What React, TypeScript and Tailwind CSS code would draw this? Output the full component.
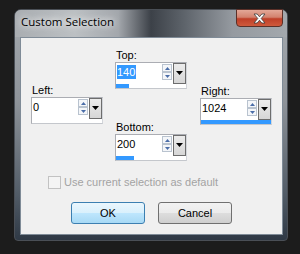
import React from 'react';

interface SpinBoxProps {
  label: string;
  value: number;
  max: number;
  selected?: boolean;
}

const SpinArrow: React.FC<{ up?: boolean }> = ({ up }) => (
  <div className="h-[8px] w-[10px] border border-[#b9c3cf] bg-[#f4f6f9] flex items-center justify-center">
    <svg width="5" height="3" viewBox="0 0 5 3">
      <path d={up ? 'M0 3H5L2.5 0Z' : 'M0 0H5L2.5 3Z'} fill="#4a6da8" />
    </svg>
  </div>
);

const SpinBox: React.FC<SpinBoxProps> = ({ label, value, max, selected }) => {
  // strip under the box shows how far the value is along its range
  const fill = Math.round((value / max) * 70);

  return (
    <div className="flex flex-col w-[72px]">
      <div className="h-[14px] leading-[14px] pl-px">{label}</div>
      <div className="h-[27px] border border-[#abadb3] border-r-[#d2d5da] border-b-[#c4c7cc] bg-white flex flex-col">
        <div className="flex h-[21px]">
          <div className="flex-1 pl-px pt-px">
            <span
              className={
                selected
                  ? 'inline-block leading-[14px] bg-[#3399ff] text-white pr-px'
                  : 'inline-block leading-[14px] text-black'
              }
            >
              {value}
            </span>
          </div>
          <div className="w-[10px] mt-[1px] mr-px flex flex-col">
            <SpinArrow up />
            <SpinArrow />
          </div>
          <div className="w-[13px] h-[21px] border border-[#6d6d6d] bg-[linear-gradient(to_bottom,#ececec,#d6d6d6)] flex justify-center pt-[7px]">
            <svg width="7" height="4" viewBox="0 0 7 4">
              <path d="M0 0H7L3.5 4Z" fill="#000" />
            </svg>
          </div>
        </div>
        <div className="h-[4px] mt-auto">
          <div className="h-full bg-[#3399ff]" style={{ width: fill }} />
        </div>
      </div>
    </div>
  );
};

const App: React.FC = () => {
  return (
    <div className="w-[300px] h-[254px] bg-[#1c1c1c] pl-[14px] pt-[9px] overflow-hidden font-['Liberation_Sans',Arial,sans-serif] text-[11px] text-black">
      <div className="relative w-[274px] h-[232px] rounded-t-[7px] rounded-b-[4px] border border-[#4a4f56] bg-[linear-gradient(to_bottom,#a6abb0_0%,#8e9399_40%,#525c67_80%,#2f3945_100%)] flex flex-col pl-[5px] pr-[4px] pb-[5px]">
        {/* title bar */}
        <div className="-ml-[5px] -mr-[4px] h-[27px] rounded-t-[6px] bg-[linear-gradient(to_right,#a9adb1_0%,#bcc0c3_22%,#a3a7ac_38%,#3c4148_50%,#5d636a_62%,#959aa0_80%,#a3a8ad_100%)] pl-[6px] pt-[4px]">
          <span className="font-['Open_Sans',sans-serif] text-[11.5px] leading-[16px] text-black [text-shadow:0_0_6px_#fff,0_0_10px_#fff]">
            Custom Selection
          </span>
        </div>

        <div className="absolute top-[-1px] right-[4px] w-[47px] h-[18px] rounded-b-[4px] border border-[#5b3028] bg-[linear-gradient(to_bottom,#e3a898_0%,#d3826e_45%,#bf3f28_55%,#cf5a3c_100%)] flex items-center justify-center">
          <svg width="13" height="11" viewBox="0 0 13 11">
            <path
              d="M1 1H4.2L6.5 3.8L8.8 1H12L8.2 5.5L12 10H8.8L6.5 7.2L4.2 10H1L4.8 5.5Z"
              fill="#fff"
              stroke="#3b3b3b"
              strokeWidth="0.8"
            />
          </svg>
        </div>

        {/* client area */}
        <div className="flex-1 bg-[#f0f0f0] border border-[#7f8b97] flex flex-col">
          <div className="flex pl-[10px] pt-[10px]">
            <div className="mt-[35px]">
              <SpinBox label="Left:" value={0} max={1024} />
            </div>
            <div className="ml-[12px] flex flex-col">
              <SpinBox label="Top:" value={140} max={768} selected />
              <div className="mt-[31px]">
                <SpinBox label="Bottom:" value={200} max={768} />
              </div>
            </div>
            <div className="ml-[13px] mt-[36px]">
              <SpinBox label="Right:" value={1024} max={1024} />
            </div>
          </div>

          <div className="mt-[15px] ml-[27px] flex items-center gap-[3px] text-[#a3a3a3]">
            <div className="w-[13px] h-[13px] border border-[#c2c2c2] bg-[#f4f4f4]" />
            <span className="leading-[13px]">Use current selection as default</span>
          </div>

          <div className="mt-[13px] flex justify-center gap-[13px]">
            <button className="w-[74px] h-[22px] rounded-[3px] border border-[#3c7fb1] bg-[linear-gradient(to_bottom,#eaf6fd_0%,#d9f0fc_50%,#bee6fd_51%,#a7d9f5_100%)] text-[11px] leading-[20px]">
              OK
            </button>
            <button className="w-[74px] h-[22px] rounded-[3px] border border-[#707070] bg-[linear-gradient(to_bottom,#f2f2f2_0%,#ebebeb_50%,#dddddd_51%,#cfcfcf_100%)] text-[11px] leading-[20px]">
              Cancel
            </button>
          </div>
        </div>
      </div>
    </div>
  );
};

export default App;
